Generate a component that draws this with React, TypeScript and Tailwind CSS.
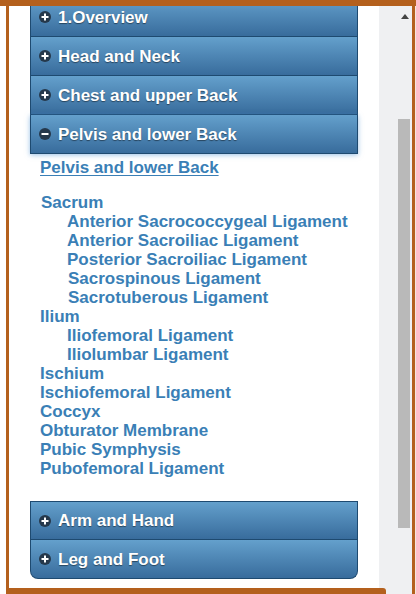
import React from "react";

const Icon = ({ open }: { open?: boolean }) => (
  <svg width="12" height="12" viewBox="0 0 12 12" className="shrink-0">
    <circle cx="6" cy="6" r="6" fill="#25384b" />
    <rect x="2.5" y="5" width="7" height="2" fill="#ffffff" />
    {!open && <rect x="5" y="2.5" width="2" height="7" fill="#ffffff" />}
  </svg>
);

const Header = ({ label, open, extra }: { label: string; open?: boolean; extra?: string }) => (
  <div
    className={
      "h-[39px] flex items-center gap-[7px] pl-[8px] border border-[#1e4a70] bg-gradient-to-b from-[#64a0cc] to-[#386c9c] text-white font-bold text-[17px] [text-shadow:0_1px_1px_rgba(0,0,0,0.45)] " +
      (extra ?? "")
    }
  >
    <Icon open={open} />
    <span className="leading-none">{label}</span>
  </div>
);

const Item = ({ children, sub }: { children: React.ReactNode; sub?: boolean }) => (
  <div className={sub ? "pl-[27px] h-[19px] leading-[19px]" : "h-[19px] leading-[19px]"}>{children}</div>
);

export default function App() {
  return (
    <div
      className="relative w-[416px] h-[594px] overflow-hidden bg-white flex"
      style={{ fontFamily: '"Liberation Sans", Arial, sans-serif' }}
    >
      <div className="w-[6px] bg-white" />
      <div className="w-[3px] bg-[#b4601d]" />
      <div className="w-[370px] pl-[21px] pr-[21px]">
        <div className="-mt-[2px] flex flex-col">
          <Header label="1.Overview" extra="border-t-0" />
          <Header label="Head and Neck" extra="border-t-0" />
          <Header label="Chest and upper Back" extra="border-t-0" />
          <Header label="Pelvis and lower Back" open extra="border-t-0 shadow-[0_1px_5px_rgba(70,140,210,0.55)] relative z-10" />
          <div className="pt-[4px] pb-[23px] pl-[10px] text-[17px] font-bold text-[#3a7fb6]">
            <div className="h-[19px] leading-[19px] underline underline-offset-[2px]">Pelvis and lower Back</div>
            <div className="h-[16px]" />
            <div className="pl-[1px]">
              <Item>Sacrum</Item>
            </div>
            <Item sub>Anterior Sacrococcygeal Ligament</Item>
            <Item sub>Anterior Sacroiliac Ligament</Item>
            <Item sub>Posterior Sacroiliac Ligament</Item>
            <div className="pl-[1px]">
              <Item sub>Sacrospinous Ligament</Item>
              <Item sub>Sacrotuberous Ligament</Item>
            </div>
            <Item>Ilium</Item>
            <Item sub>Iliofemoral Ligament</Item>
            <Item sub>Iliolumbar Ligament</Item>
            <Item>Ischium</Item>
            <Item>Ischiofemoral Ligament</Item>
            <Item>Coccyx</Item>
            <Item>Obturator Membrane</Item>
            <Item>Pubic Symphysis</Item>
            <Item>Pubofemoral Ligament</Item>
          </div>
          <Header label="Arm and Hand" />
          <Header label="Leg and Foot" extra="border-t-0 rounded-b-[8px]" />
        </div>
      </div>
      <div className="w-[33px] bg-[#eff0f2] flex flex-col">
        <div className="mt-[14px] ml-[22px] w-0 h-0 border-l-[4px] border-r-[4px] border-b-[5px] border-l-transparent border-r-transparent border-b-[#444]" />
        <div className="mt-[100px] ml-[19px] w-[12px] h-[409px] bg-[#b9b9b9]" />
      </div>
      <div className="w-[3px] bg-[#b4601d]" />
      <div className="w-[1px] bg-[#f5e6da]" />
      <div className="absolute top-0 left-0 right-0 h-[6px] bg-[#b4601d]" />
      <div className="absolute bottom-0 left-[8px] w-[378px] h-[6px] bg-[#b4601d] rounded-tr-[3px]" />
    </div>
  );
}
